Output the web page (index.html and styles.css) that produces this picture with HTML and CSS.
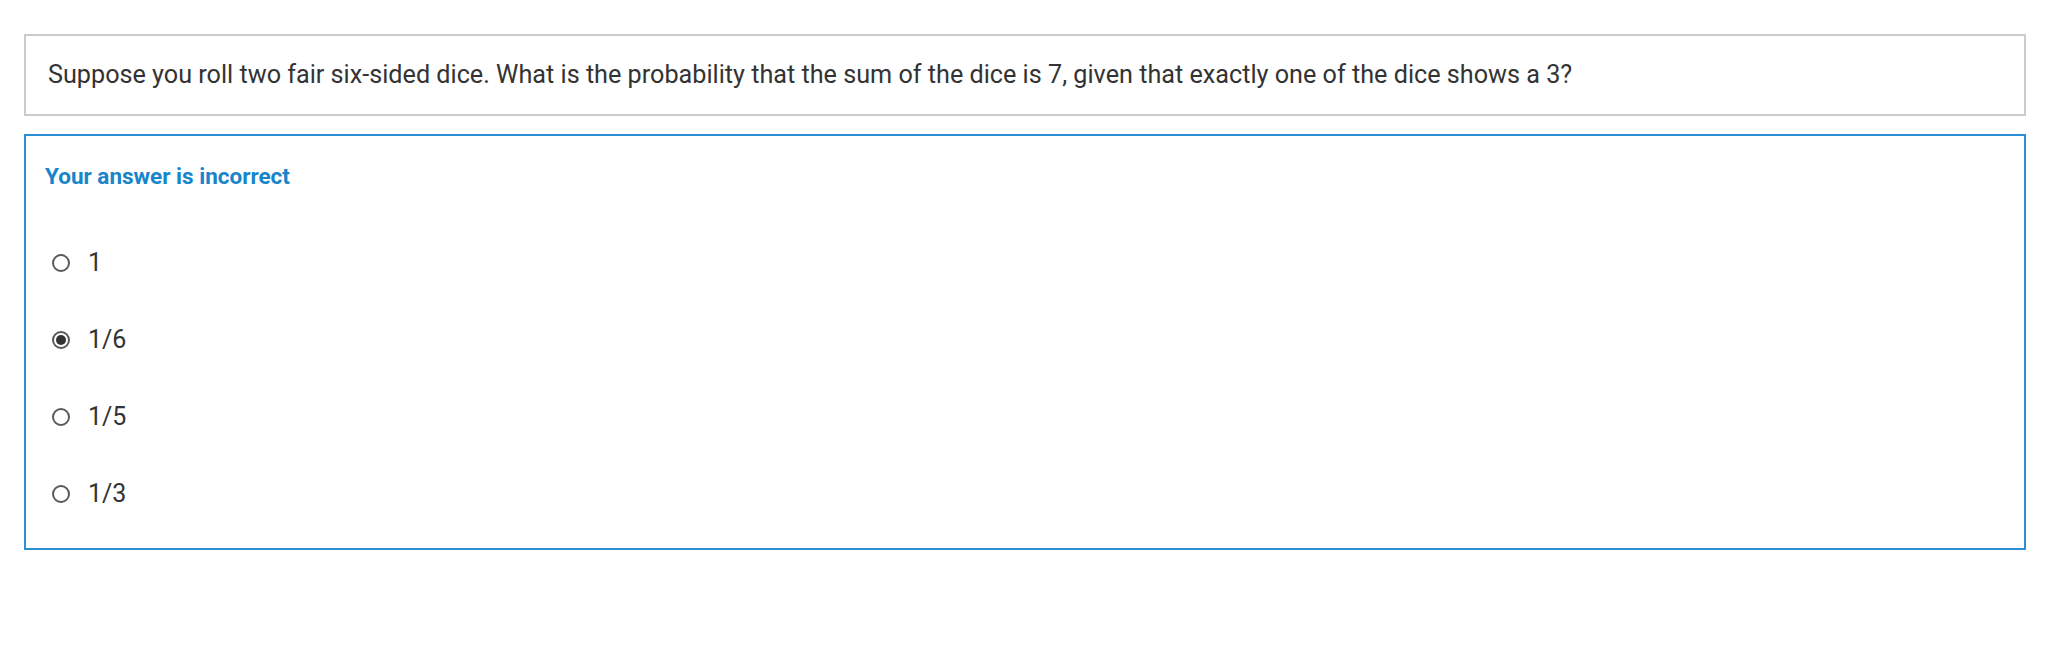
FILE: index.html
```html
<!DOCTYPE html>
<html lang="en">
<head>
<meta charset="utf-8">
<title>Quiz</title>
<link rel="stylesheet" href="styles.css">
</head>
<body>
  <div class="question">
    <p>Suppose you roll two fair six-sided dice. What is the probability that the sum of the dice is 7, given that exactly one of the dice shows a 3?</p>
  </div>
  <div class="feedback">
    <div class="feedback-title">Your answer is incorrect</div>
    <ul class="options">
      <li class="option"><span class="radio"></span><span class="label">1</span></li>
      <li class="option"><span class="radio checked"></span><span class="label">1/6</span></li>
      <li class="option"><span class="radio"></span><span class="label">1/5</span></li>
      <li class="option"><span class="radio"></span><span class="label">1/3</span></li>
    </ul>
  </div>
</body>
</html>
```
FILE: styles.css
```css
html, body {
  margin: 0;
  background: #ffffff;
}
body {
  padding: 34px 24px 0 24px;
  font-family: Roboto, "Liberation Sans", sans-serif;
  color: #333333;
}
.question {
  height: 82px;
  box-sizing: border-box;
  border: 2px solid #cdcac7;
  padding: 0 22px;
  display: flex;
  align-items: center;
}
.question p {
  margin: 0;
  font-size: 25.2px;
  line-height: 30px;
}
.feedback {
  margin-top: 18px;
  border: 2px solid #2a8fd7;
  padding: 25px 20px 16px 19px;
}
.feedback-title {
  font-size: 22.5px;
  font-weight: 700;
  line-height: 30px;
  color: #1885cb;
  margin-bottom: 33px;
}
.options {
  list-style: none;
  margin: 0;
  padding: 0;
}
.option {
  height: 77px;
  display: flex;
  align-items: center;
  padding-left: 7px;
}
.radio {
  width: 18px;
  height: 18px;
  box-sizing: border-box;
  border: 2px solid #5a5a5a;
  border-radius: 50%;
  background: #fff;
  margin-right: 18px;
  position: relative;
  flex: none;
}
.radio.checked::after {
  content: "";
  position: absolute;
  left: 2px;
  top: 2px;
  width: 10px;
  height: 10px;
  border-radius: 50%;
  background: #333333;
}
.label {
  font-size: 25px;
  line-height: 30px;
  color: #333333;
}
```
